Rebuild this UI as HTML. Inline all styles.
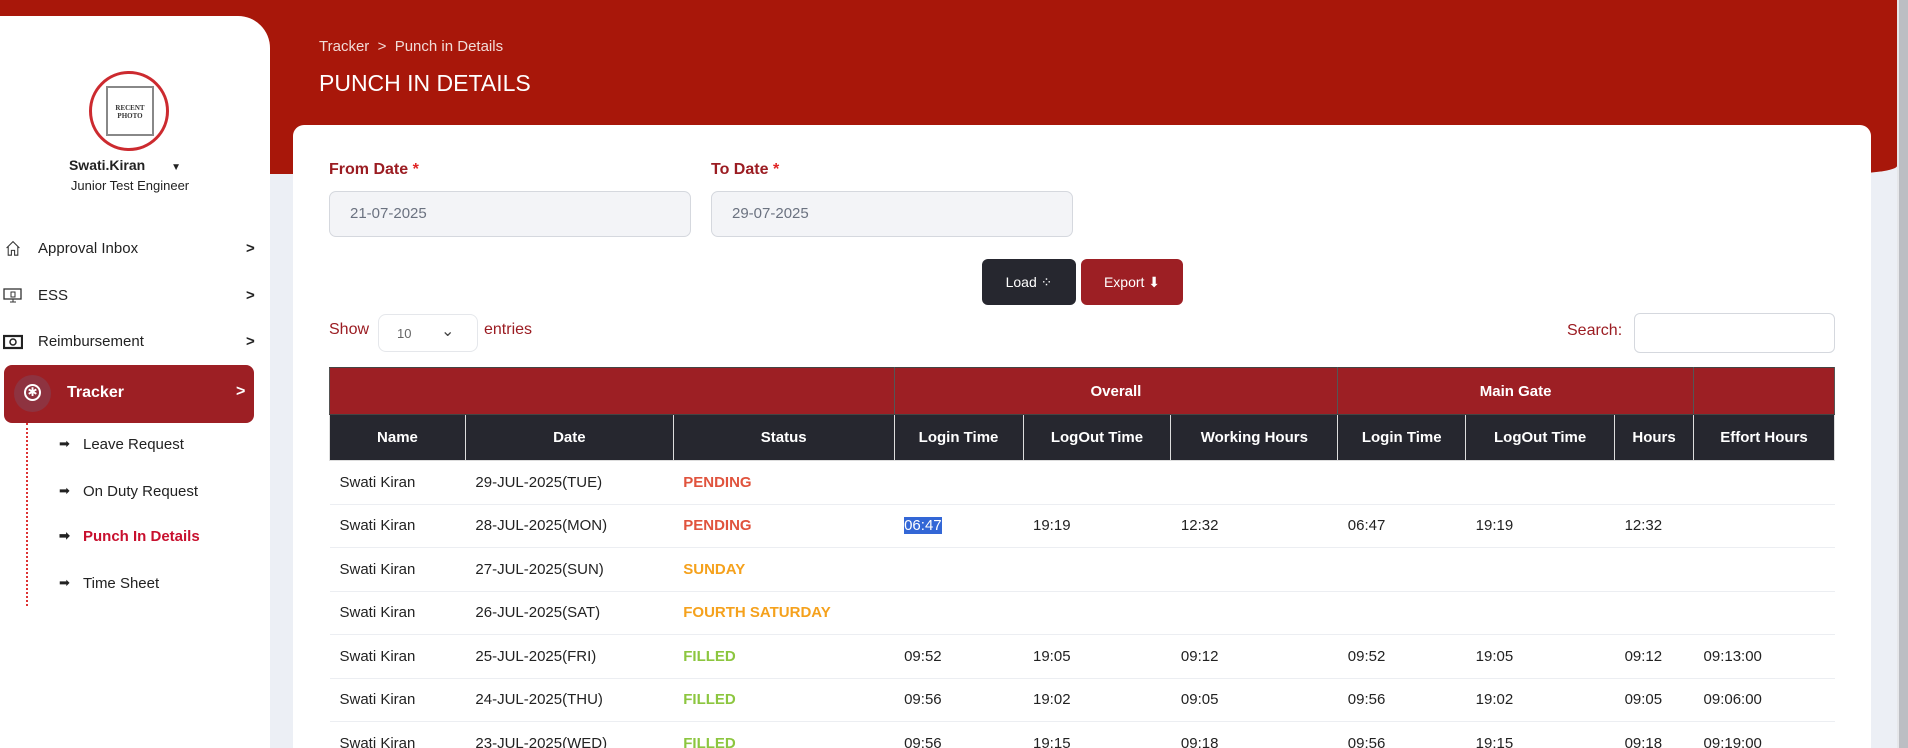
<!DOCTYPE html>
<html style="width:1908px;height:748px;overflow:hidden"><head><meta charset="utf-8"><style>
*{box-sizing:border-box;margin:0;padding:0}
body{width:1908px;height:748px;overflow:hidden;background:#eceff5;font-family:"Liberation Sans",sans-serif;position:relative;color:#222}
.red{position:absolute;left:0;top:0;width:1897px;height:174px;background:#a8170a;border-radius:0 0 60px 60px/0 0 8px 8px}
.sb{position:absolute;left:1897px;top:0;width:11px;height:748px;background:#bcbec3;border-left:2px solid #e6e7ea}
.side{position:absolute;left:0;top:16px;width:270px;height:732px;background:#fff;border-radius:0 32px 0 0}
.av{position:absolute;left:89px;top:55px;width:80px;height:80px;border:3px solid #cc2a2f;border-radius:50%;background:#fff}
.av div{position:absolute;left:14px;top:12px;width:48px;height:50px;border:2px solid #888;font:bold 7px "Liberation Serif",serif;text-align:center;padding-top:16px;line-height:8px;color:#333}
.nm{position:absolute;left:0;width:260px;text-align:center;font-size:14px}
.mi{position:absolute;left:38px;font-size:15px;color:#222}
.chev{position:absolute;left:246px;font-size:15px;font-weight:bold;color:#222}
.ico{position:absolute;left:3px;width:20px;height:16px}
.trk{position:absolute;left:4px;top:365px;width:250px;height:58px;background:#9d1f24;border-radius:8px}
.sub{position:absolute;left:83px;font-size:15px;color:#222}
.sub:before{content:"➡";position:absolute;left:-24px;font-size:13px;color:#222}
.bc{position:absolute;left:319px;top:38px;color:#f1dcd8;font-size:15px}
.tt{position:absolute;left:319px;top:70px;color:#fff;font-size:23px}
.card{position:absolute;left:293px;top:125px;width:1578px;height:623px;background:#fff;border-radius:11px 11px 0 0}
.lb{position:absolute;top:161px;color:#9b1c22;font-weight:bold;font-size:16px}
.lb span{color:#e02424}
.inp{position:absolute;top:191px;width:362px;height:46px;background:#f3f4f7;border:1px solid #d5d8de;border-radius:7px;font-size:15px;color:#6b7280;padding:13px 20px}
.btn{position:absolute;top:259px;height:46px;border-radius:6px;color:#fff;font-size:14px;text-align:center;line-height:46px}
table{position:absolute;left:329px;top:367px;width:1506px;border-collapse:collapse;font-size:15px}
th{color:#fff;font-weight:bold;font-size:15px;font-family:"Liberation Sans Narrow","Liberation Sans",sans-serif;height:47px;border:1px solid #ddd}
tr.g th{background:#9d1f24;border-color:#444 #555}
tr.h th{background:#26272f;height:46px}
td{height:43.5px;padding-left:10px;border-bottom:1px solid #eceef2;color:#222}
.p{color:#e0533d;font-weight:bold}.o{color:#f5a11c;font-weight:bold}.f{color:#8cc63f;font-weight:bold}
</style></head><body>
<div class="red"></div><div class="sb"></div>
<div class="side">
<div class="av"><div>RECENT<br>PHOTO</div></div>
<div class="nm" style="top:141px;font-weight:bold;left:-5px">Swati.Kiran <span style="font-size:10px;margin-left:22px">▼</span></div>
<div class="nm" style="top:162px;font-size:13px;left:0">Junior Test Engineer</div>
</div>
<svg class="ico" style="top:240px" viewBox="0 0 20 20"><path d="M2 10 L10 2 L18 10 M4 8 V19 H8 V13 H12 V19 H16 V8" fill="none" stroke="#333" stroke-width="1.3"/></svg>
<div class="mi" style="top:240px">Approval Inbox</div><div class="chev" style="top:240px">&gt;</div>
<svg class="ico" style="top:288px" viewBox="0 0 20 16"><rect x="1" y="1" width="17" height="10" fill="none" stroke="#333" stroke-width="1.3"/><path d="M7 14 H13 M10 11 V14 M8 4 h4 v5 h-4z" stroke="#333" fill="none"/></svg>
<div class="mi" style="top:287px">ESS</div><div class="chev" style="top:287px">&gt;</div>
<svg class="ico" style="top:334px" viewBox="0 0 20 14"><rect x="1" y="1" width="18" height="12" fill="none" stroke="#222" stroke-width="2.2"/><circle cx="10" cy="7" r="3" fill="none" stroke="#222" stroke-width="1.5"/></svg>
<div class="mi" style="top:333px">Reimbursement</div><div class="chev" style="top:333px">&gt;</div>
<div class="trk"><div style="position:absolute;left:10px;top:10px;width:37px;height:37px;border-radius:50%;background:#8e3340"></div><div style="position:absolute;left:20px;top:19px;width:17px;height:17px;border:2px solid #fff;border-radius:50%;color:#fff;font-size:12px;line-height:13px;text-align:center">✱</div>
<div style="position:absolute;left:63px;top:19px;color:#fff;font-weight:bold;font-size:16px">Tracker</div><div style="position:absolute;left:232px;top:18px;color:#fff;font-weight:bold">&gt;</div></div>
<div style="position:absolute;left:26px;top:423px;height:183px;border-left:2px dotted #d33"></div>
<div class="sub" style="top:436px">Leave Request</div>
<div class="sub" style="top:483px">On Duty Request</div>
<div class="sub" style="top:528px;color:#c8102e;font-weight:bold">Punch In Details</div>
<div class="sub" style="top:575px">Time Sheet</div>
<div class="bc">Tracker &nbsp;&gt;&nbsp; Punch in Details</div>
<div class="tt">PUNCH IN DETAILS</div>
<div class="card"></div>
<div class="lb" style="left:329px">From Date <span>*</span></div>
<div class="lb" style="left:711px">To Date <span>*</span></div>
<div class="inp" style="left:329px">21-07-2025</div>
<div class="inp" style="left:711px">29-07-2025</div>
<div class="btn" style="left:982px;width:94px;background:#26272f">Load ⁘</div>
<div class="btn" style="left:1081px;width:102px;background:#9d1f24">Export ⬇</div>
<div style="position:absolute;left:329px;top:321px;color:#9b1c22;font-size:16px">Show</div>
<div style="position:absolute;left:378px;top:314px;width:100px;height:38px;border:1px solid #e5e7eb;border-radius:8px;font-size:13px;color:#666;padding:11px 18px">10 <span style="position:absolute;left:62px;top:6px;font-size:16px;color:#444">⌄</span></div>
<div style="position:absolute;left:484px;top:321px;color:#9b1c22;font-size:16px">entries</div>
<div style="position:absolute;left:1567px;top:322px;color:#9b1c22;font-size:16px">Search:</div>
<div style="position:absolute;left:1634px;top:313px;width:201px;height:40px;border:1px solid #d5d8de;border-radius:6px"></div>
<table>
<colgroup><col style="width:136px"><col style="width:208px"><col style="width:221px"><col style="width:129px"><col style="width:148px"><col style="width:167px"><col style="width:128px"><col style="width:149px"><col style="width:79px"><col style="width:141px"></colgroup>
<tr class="g"><th colspan="3"></th><th colspan="3">Overall</th><th colspan="3">Main Gate</th><th></th></tr>
<tr class="h"><th>Name</th><th>Date</th><th>Status</th><th>Login Time</th><th>LogOut Time</th><th>Working Hours</th><th>Login Time</th><th>LogOut Time</th><th>Hours</th><th>Effort Hours</th></tr>
<tr><td>Swati Kiran</td><td>29-JUL-2025(TUE)</td><td class="p">PENDING</td><td></td><td></td><td></td><td></td><td></td><td></td><td></td></tr>
<tr><td>Swati Kiran</td><td>28-JUL-2025(MON)</td><td class="p">PENDING</td><td><span style="background:#3367d6;color:#fff">06:47</span></td><td>19:19</td><td>12:32</td><td>06:47</td><td>19:19</td><td>12:32</td><td></td></tr>
<tr><td>Swati Kiran</td><td>27-JUL-2025(SUN)</td><td class="o">SUNDAY</td><td></td><td></td><td></td><td></td><td></td><td></td><td></td></tr>
<tr><td>Swati Kiran</td><td>26-JUL-2025(SAT)</td><td class="o">FOURTH SATURDAY</td><td></td><td></td><td></td><td></td><td></td><td></td><td></td></tr>
<tr><td>Swati Kiran</td><td>25-JUL-2025(FRI)</td><td class="f">FILLED</td><td>09:52</td><td>19:05</td><td>09:12</td><td>09:52</td><td>19:05</td><td>09:12</td><td>09:13:00</td></tr>
<tr><td>Swati Kiran</td><td>24-JUL-2025(THU)</td><td class="f">FILLED</td><td>09:56</td><td>19:02</td><td>09:05</td><td>09:56</td><td>19:02</td><td>09:05</td><td>09:06:00</td></tr>
<tr><td>Swati Kiran</td><td>23-JUL-2025(WED)</td><td class="f">FILLED</td><td>09:56</td><td>19:15</td><td>09:18</td><td>09:56</td><td>19:15</td><td>09:18</td><td>09:19:00</td></tr>
</table>
</body></html>
